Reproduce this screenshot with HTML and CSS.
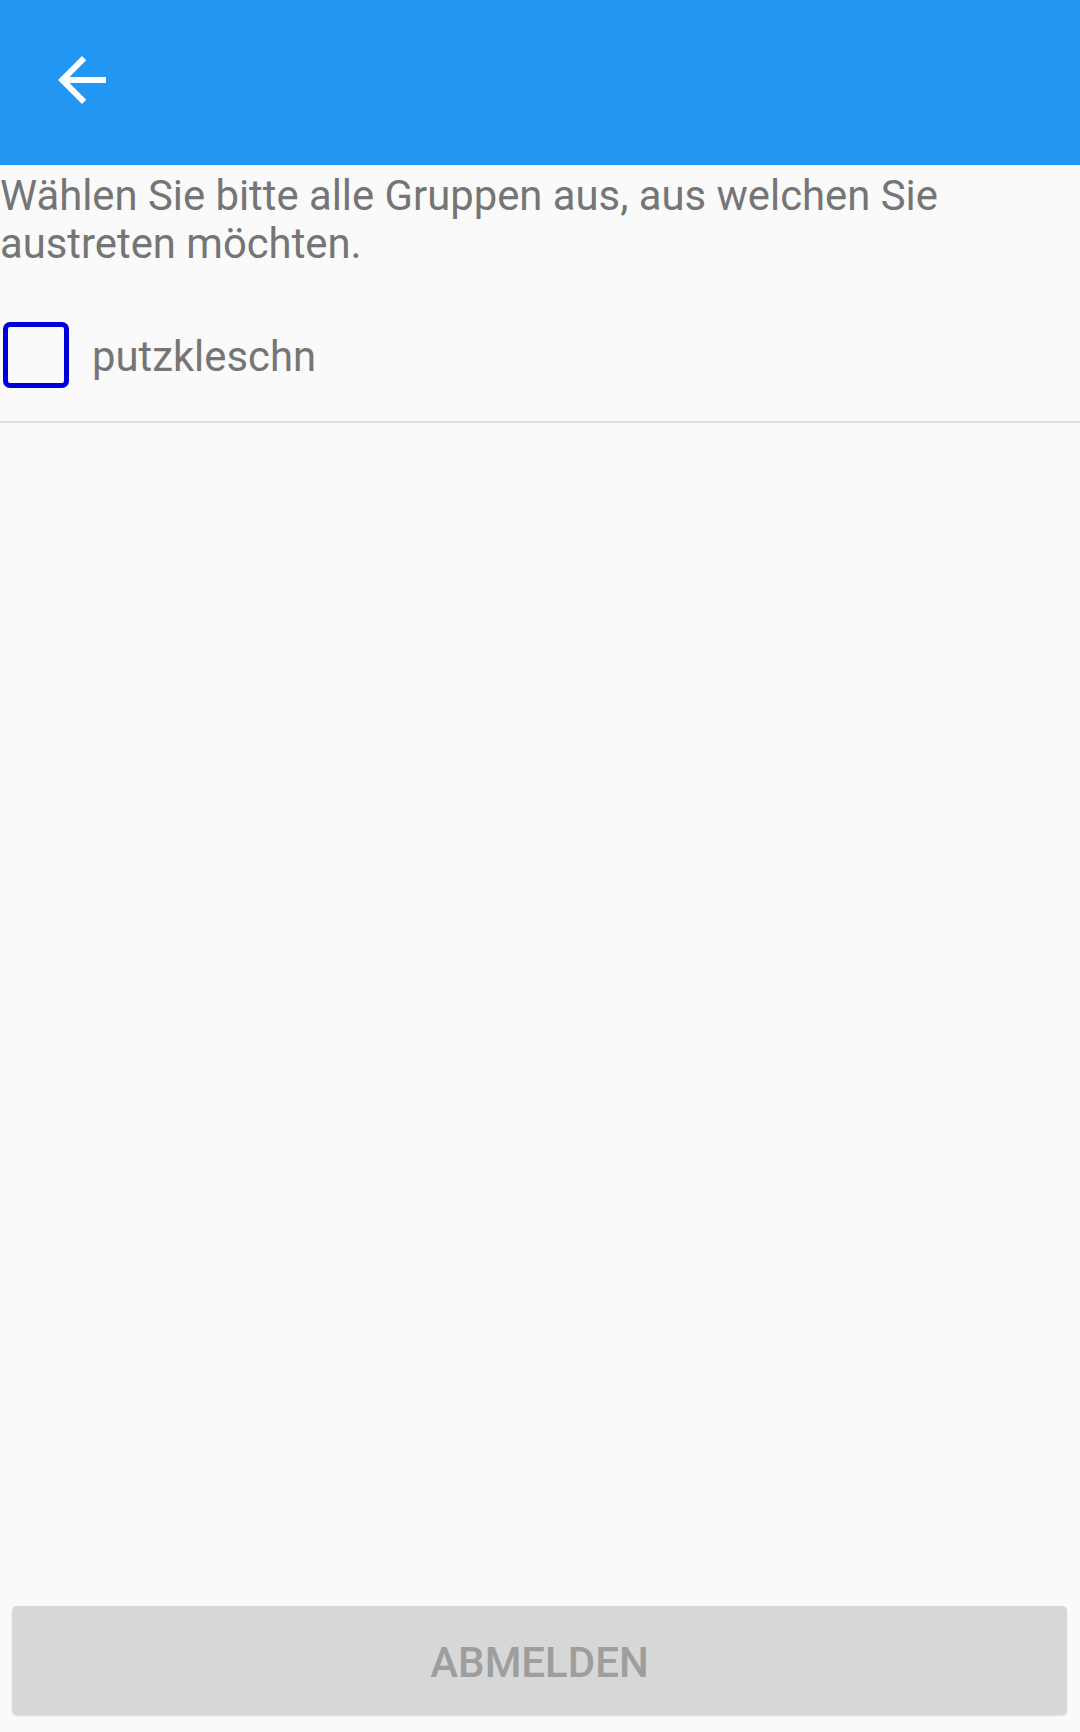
FILE: index.html
```html
<!DOCTYPE html>
<html lang="de">
<head>
<meta charset="utf-8">
<title>Gruppen austreten</title>
<link rel="stylesheet" href="styles.css">
</head>
<body>
<div class="screen">
  <header class="appbar">
    <button class="back" aria-label="Zurück">
      <svg viewBox="0 0 24 24" width="72" height="72"><path fill="#ffffff" d="M20 11H7.83l5.59-5.59L12 4l-8 8 8 8 1.41-1.41L7.83 13H20v-2z"/></svg>
    </button>
  </header>
  <main class="content">
    <p class="intro">Wählen Sie bitte alle Gruppen aus, aus welchen Sie austreten möchten.</p>
    <label class="group-row">
      <span class="checkbox"></span>
      <span class="group-name">putzkleschn</span>
    </label>
  </main>
  <div class="footer">
    <button class="submit" disabled>ABMELDEN</button>
  </div>
</div>
</body>
</html>
```
FILE: styles.css
```css
* { box-sizing: border-box; }
html, body { margin: 0; padding: 0; }
body {
  background: #fafafa;
  font-family: Roboto, "Noto Sans", sans-serif;
}
.screen {
  width: 1080px;
  height: 1732px;
  display: flex;
  flex-direction: column;
}
.appbar {
  height: 165px;
  background: #2196f3;
  display: flex;
  align-items: flex-start;
  padding: 44px 0 0 46px;
  flex: none;
}
.back {
  width: 72px;
  height: 72px;
  padding: 0;
  border: 0;
  background: transparent;
  display: block;
}
.back svg { display: block; }
.content {
  flex: 1;
}
.intro {
  margin: 0;
  padding-top: 7px;
  font-size: 41.8px;
  line-height: 48px;
  color: #757575;
}
.group-row {
  display: flex;
  align-items: center;
  gap: 23px;
  padding: 54px 0 33px 3px;
  border-bottom: 2px solid #e0e0e0;
}
.checkbox {
  width: 66px;
  height: 66px;
  border: 5.5px solid #0000dd;
  border-radius: 7px;
  flex: none;
}
.group-name {
  font-size: 41.8px;
  line-height: 48px;
  color: #757575;
  padding-top: 3px;
}
.footer {
  padding: 0 13px 17px 12px;
  flex: none;
}
.submit {
  width: 100%;
  height: 109px;
  border: 0;
  border-radius: 5px;
  background: #d6d7d7;
  color: #9e9e9e;
  font-family: Roboto, "Noto Sans", sans-serif;
  font-weight: 500;
  font-size: 42px;
  letter-spacing: 0;
  padding-top: 4px;
  box-shadow: 0 1px 2px rgba(0,0,0,0.12);
}
```
